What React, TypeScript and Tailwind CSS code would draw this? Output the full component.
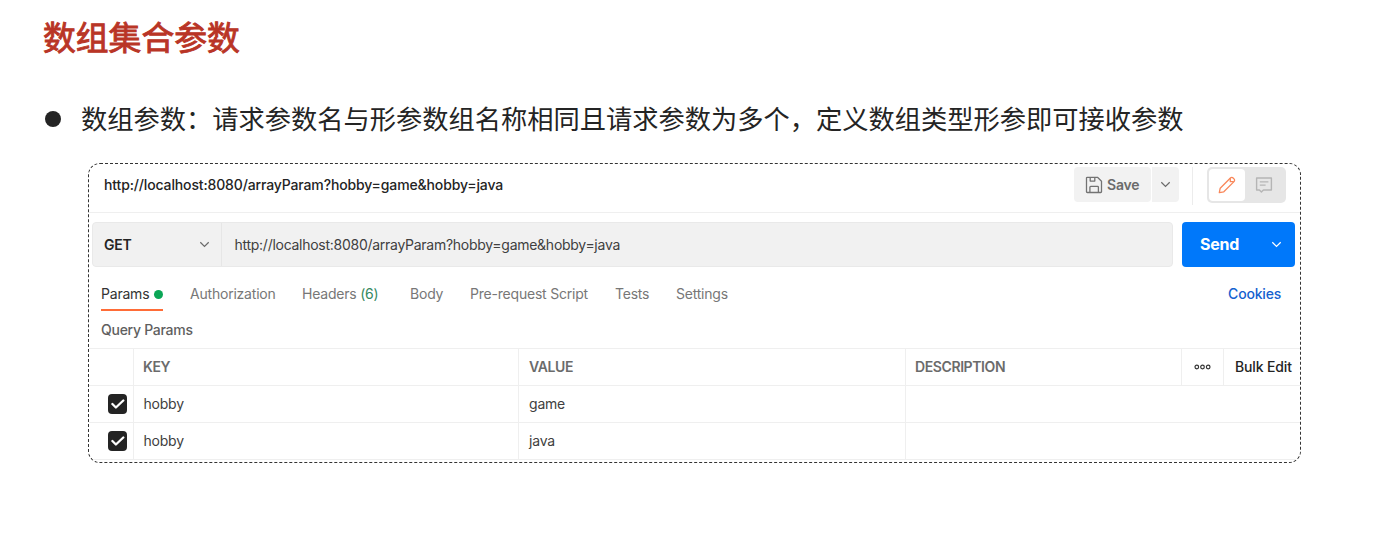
import React from "react";

function Chevron({ className }: { className: string }) {
  return (
    <svg viewBox="0 0 12 8" className={className} fill="none" stroke="currentColor" strokeWidth="1.4">
      <path d="M1.2 1.4 6 6.2l4.8-4.8" />
    </svg>
  );
}

function SaveIcon() {
  return (
    <svg viewBox="0 0 18 18" className="h-[18px] w-[18px] shrink-0" fill="none" stroke="#737373" strokeWidth="1.3" strokeLinejoin="round">
      <path d="M2.3 1.3h10.2l4 4v10.4a.8.8 0 0 1-.8.8H2.3a.8.8 0 0 1-.8-.8V2.1a.8.8 0 0 1 .8-.8z" />
      <path d="M5.2 1.5v3.6h4.6V1.5" />
      <path d="M4.9 16.3v-5.1a.8.8 0 0 1 .8-.8h6.9a.8.8 0 0 1 .8.8v5.1" />
    </svg>
  );
}

function PencilIcon() {
  return (
    <svg viewBox="0 0 18 18" className="h-[18px] w-[18px]" fill="none" stroke="#f9875a" strokeWidth="1.3" strokeLinejoin="round">
      <path d="m1.3 16.7.9-4.5L12.4 2a1.9 1.9 0 0 1 2.7 0l.9.9a1.9 1.9 0 0 1 0 2.7L5.8 15.8z" />
      <path d="M12.3 2.2v3.5h3.5" />
    </svg>
  );
}

function CommentIcon() {
  return (
    <svg viewBox="0 0 18 18" className="h-[18px] w-[18px]" fill="none" stroke="#b5b5b5" strokeWidth="1.4" strokeLinejoin="round">
      <path d="M1.6 2h14.8v12H8.4l-2 2-2-2H1.6z" />
      <path d="M4.8 5.9h8.6M4.8 9.1h5.8" />
    </svg>
  );
}

function Checkbox() {
  return (
    <span className="flex h-5 w-[19px] items-center justify-center rounded-[4px] bg-[#242424]">
      <svg viewBox="0 0 14 10" className="h-[10px] w-[14px]" fill="none" stroke="#fff" strokeWidth="2.3" strokeLinecap="round" strokeLinejoin="round">
        <path d="m1.4 5 3.5 3.5 7.4-7" />
      </svg>
    </span>
  );
}

const rows = [
  { name: "hobby", value: "game" },
  { name: "hobby", value: "java" },
];

export default function App() {
  return (
    <main className="h-[537px] w-[1384px] overflow-hidden bg-white font-['Inter','Noto_Sans_CJK_SC',sans-serif] text-[#242424]">
      <h1 className="ml-[43px] mt-[12px] h-12 whitespace-nowrap font-['Noto_Sans_CJK_SC',sans-serif] text-[32.8px] font-normal leading-[48px] text-[#b93526] [-webkit-text-stroke:0.9px_#b93526]">
        数组集合参数
      </h1>
      <div className="ml-[45px] mt-[38px] flex h-10 items-center">
        <span className="mt-px h-4 w-4 shrink-0 rounded-full bg-[#242424]" />
        <p className="ml-5 whitespace-nowrap font-['Noto_Sans_CJK_SC',sans-serif] text-[26.26px] leading-10">
          数组参数：请求参数名与形参数组名称相同且请求参数为多个，定义数组类型形参即可接收参数
        </p>
      </div>

      <section className="ml-[88px] mt-[25px] flex h-[300px] w-[1213px] flex-col overflow-hidden rounded-[12px] border border-dashed border-[#333] text-[14px] tracking-[-0.21px]">
        <header className="flex h-[49px] shrink-0 items-start border-b border-[#efefef] pl-[15px] pr-[14px]">
          <span className="h-[42px] font-medium leading-[42px] tracking-[-0.14px]">http://localhost:8080/arrayParam?hobby=game&amp;hobby=java</span>
          <div className="ml-auto mt-[3px] flex h-[35px] gap-px font-semibold text-[#6b6b6b]">
            <span className="flex w-[77px] items-center rounded-[4px] bg-[#f2f2f2] pl-[11px]">
              <SaveIcon />
              <span className="ml-1">Save</span>
            </span>
            <span className="flex w-[27px] items-center justify-center rounded-r-[4px] bg-[#f2f2f2]">
              <Chevron className="h-[7px] w-[11px]" />
            </span>
          </div>
          <span className="ml-[13px] mt-[3px] h-[38px] w-px bg-[#ececec]" />
          <div className="ml-[14px] mt-[3px] flex h-9 w-[79px] rounded-[5px] bg-[#e6e6e6] p-[2px]">
            <span className="flex w-9 items-center justify-center rounded-[4px] bg-white"><PencilIcon /></span>
            <span className="flex flex-1 items-center justify-center pr-[2px]"><CommentIcon /></span>
          </div>
        </header>

        <div className="ml-[3px] mt-[9px] flex h-[45px] shrink-0">
          <div className="flex w-[1081px] rounded-[4px] border border-[#e9e9e9] bg-[#f1f1f1]">
            <div className="flex w-[129px] items-center justify-between border-r border-[#e6e6e6] pl-[11px] pr-[11px]">
              <span className="font-semibold">GET</span>
              <Chevron className="h-[7px] w-[11px] text-[#6b6b6b]" />
            </div>
            <span className="pl-[12.5px] leading-[43px] tracking-[-0.27px] text-[#404040]">http://localhost:8080/arrayParam?hobby=game&amp;hobby=java</span>
          </div>
          <div className="ml-[9px] flex w-[113px] items-center rounded-[4px] bg-[#0078fa] pl-[18px] pr-[13px] text-white">
            <span className="-mt-[2px] text-[16px] font-bold">Send</span>
            <Chevron className="ml-auto h-[7px] w-[11px]" />
          </div>
        </div>

        <nav className="flex h-[44px] shrink-0 pl-3 pr-[19px] leading-[54px] text-[#777]">
          <div className="flex w-[62px] justify-between border-b-2 border-[#ff6c37] text-[#333]">
            <span>Params</span>
            <span className="mt-[23px] h-[9px] w-[9px] rounded-full bg-[#0ba656]" />
          </div>
          <span className="ml-[27px] w-[112px]">Authorization</span>
          <span className="w-[108px]">Headers <span className="text-[#35895f]">(6)</span></span>
          <span className="w-[60px]">Body</span>
          <span className="w-[145px]">Pre-request Script</span>
          <span className="w-[61px]">Tests</span>
          <span>Settings</span>
          <span className="ml-auto font-medium tracking-[-0.2px] text-[#1561cf]">Cookies</span>
        </nav>

        <h2 className="h-[37px] shrink-0 pl-3 font-medium leading-[37px] tracking-[-0.27px] text-[#5f5f5f]">Query Params</h2>

        <div className="grid h-[38px] shrink-0 grid-cols-[45px_385px_387px_276px_42px_1fr] border-y border-[#efefef] font-semibold leading-[35px] tracking-[-0.4px] text-[#6b6b6b]">
          <span className="border-r border-[#efefef]" />
          <span className="border-r border-[#efefef] pl-[9px]">KEY</span>
          <span className="border-r border-[#efefef] pl-[10px]">VALUE</span>
          <span className="border-r border-[#efefef] pl-[9px]">DESCRIPTION</span>
          <span className="flex items-center justify-center border-r border-[#efefef]">
            <svg viewBox="0 0 17 6" className="h-[6px] w-[17px]" fill="none" stroke="#333" strokeWidth="1.2">
              <circle cx="2.8" cy="3" r="1.8" /><circle cx="8.5" cy="3" r="1.8" /><circle cx="14.2" cy="3" r="1.8" />
            </svg>
          </span>
          <span className="whitespace-nowrap pl-[11px] font-medium tracking-[-0.15px] text-[#242424]">Bulk Edit</span>
        </div>
        {rows.map((row) => (
          <div key={row.value} className="grid h-[37px] shrink-0 grid-cols-[45px_385px_387px_1fr] border-b border-[#efefef] leading-[35px] text-[#404040]">
            <span className="flex items-center justify-end border-r border-[#efefef] pr-[6px]"><Checkbox /></span>
            <span className="border-r border-[#efefef] pl-[9.5px]">{row.name}</span>
            <span className="border-r border-[#efefef] pl-[10px]">{row.value}</span>
            <span />
          </div>
        ))}
      </section>
    </main>
  );
}
